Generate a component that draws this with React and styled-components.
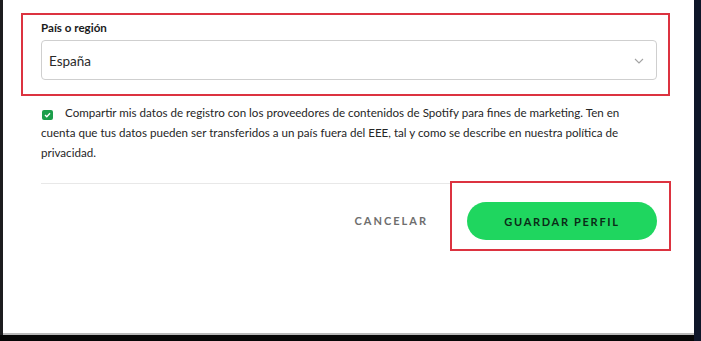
import React from "react";
import styled, { createGlobalStyle } from "styled-components";

const Global = createGlobalStyle`
  html, body { margin: 0; padding: 0; background: #060606; }
  body { font-family: "Lato", "Open Sans", sans-serif; }
  * { box-sizing: border-box; }
`;

const Frame = styled.div`
  width: 701px;
  height: 341px;
  display: flex;
  background: #060606;
  overflow: hidden;
`;

const LeftEdge = styled.div`
  width: 3px;
  height: 335px;
  background: #1d1d1f;
`;

const RightEdge = styled.div`
  width: 7px;
  height: 341px;
  background: #0e1629;
`;

const Screen = styled.div`
  width: 691px;
  height: 335px;
  background: #fff;
  border-bottom: 2px solid #b9b9b9;
  padding: 13px 24px 0 18px;
  display: flex;
  flex-direction: column;
`;

const Highlight = styled.div`
  border: 2px solid #dc3340;
  background: #fff;
  position: relative;
  z-index: 1;
`;

const FieldBox = styled(Highlight)`
  padding: 5px 11px 14px 18px;
`;

const Label = styled.div`
  font-size: 11.6px;
  font-weight: 700;
  line-height: 16px;
  color: #1b1b1b;
  margin-bottom: 4px;
`;

const Select = styled.div`
  height: 40px;
  border: 1px solid #cfcfcf;
  border-radius: 4px;
  display: flex;
  align-items: center;
  justify-content: space-between;
  padding: 1px 12px 0 7px;
  font-size: 13.5px;
  color: #2a2a2a;
`;

const Body = styled.div`
  padding: 0 13px 0 20px;
  display: flex;
  flex-direction: column;
`;

const Paragraph = styled.p`
  margin: 7px 0 0;
  font-size: 11.6px;
  line-height: 20px;
  color: #262626;
  padding-right: 10px;
`;

const Check = styled.span`
  display: inline-flex;
  align-items: center;
  justify-content: center;
  width: 11px;
  height: 10px;
  border-radius: 2px;
  background: #1c9e4b;
  vertical-align: -1px;
  margin: 0 12px 0 1px;
`;

const Divider = styled.div`
  height: 1px;
  background: #e8e8e8;
  margin-top: 20px;
`;

const Actions = styled.div`
  display: flex;
  align-items: flex-start;
  justify-content: flex-end;
  margin-top: -3px;
  margin-right: -14px;
`;

const TextButton = styled.span`
  font-size: 11px;
  font-weight: 700;
  line-height: 16px;
  letter-spacing: 2px;
  color: #6e6e6e;
  margin: 32px 22px 0 0;
`;

const ButtonBox = styled(Highlight)`
  width: 221px;
  height: 70px;
  padding: 19px 12px 0 15px;
`;

const PrimaryButton = styled.div`
  height: 38px;
  border-radius: 19px;
  background: #1fd65f;
  color: #0b2b17;
  font-size: 11px;
  font-weight: 700;
  letter-spacing: 1.7px;
  display: flex;
  align-items: center;
  justify-content: center;
`;

export default function App() {
  return (
    <>
      <Global />
      <Frame>
        <LeftEdge />
        <Screen>
          <FieldBox>
            <Label>País o región</Label>
            <Select>
              <span>España</span>
              <svg width="10" height="6" viewBox="0 0 10 6" fill="none">
                <path d="M1 1l4 4 4-4" stroke="#a3a3a3" strokeWidth="1.1" />
              </svg>
            </Select>
          </FieldBox>
          <Body>
            <Paragraph>
              <Check>
                <svg width="7" height="6" viewBox="0 0 7 6" fill="none">
                  <path d="M1 3l1.8 1.8L6 1.2" stroke="#fff" strokeWidth="1.3" />
                </svg>
              </Check>
              Compartir mis datos de registro con los proveedores de contenidos de Spotify para fines de marketing. Ten en cuenta que tus datos pueden ser transferidos a un país fuera del EEE, tal y como se describe en nuestra política de privacidad.
            </Paragraph>
            <Divider />
            <Actions>
              <TextButton>CANCELAR</TextButton>
              <ButtonBox>
                <PrimaryButton>GUARDAR PERFIL</PrimaryButton>
              </ButtonBox>
            </Actions>
          </Body>
        </Screen>
        <RightEdge />
      </Frame>
    </>
  );
}
